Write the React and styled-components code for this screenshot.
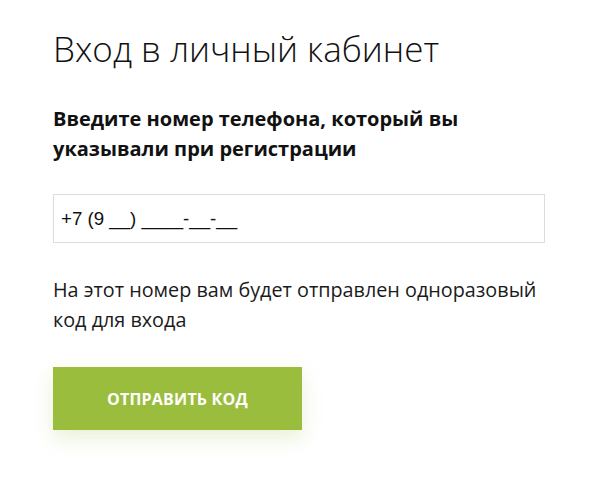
import React from "react";
import styled, { createGlobalStyle } from "styled-components";

const Global = createGlobalStyle`
  html, body { margin: 0; padding: 0; background: #fff; }
  body { font-family: "Open Sans", "Noto Sans", sans-serif; color: #1a1a1a; }
`;

const Page = styled.div`
  display: flex;
  flex-direction: column;
  align-items: flex-start;
  padding: 28px 55px 40px 53px;
`;

const Title = styled.h1`
  margin: 0;
  font-size: 35px;
  font-weight: 300;
  line-height: 42px;
  color: #111;
`;

const Lead = styled.h2`
  margin: 34px 0 0;
  font-size: 20px;
  font-weight: 700;
  line-height: 30px;
  color: #111;
`;

const PhoneInput = styled.input`
  box-sizing: border-box;
  margin-top: 30px;
  width: 492px;
  height: 49px;
  padding: 0 7px;
  border: 1px solid #dcdcdc;
  border-radius: 0;
  font-family: "Liberation Sans", Arial, sans-serif;
  font-size: 18.7px;
  color: #111;
  outline: none;
  &::placeholder { color: #111; opacity: 1; }
`;

const Note = styled.p`
  margin: 32px 0 0;
  font-size: 19.8px;
  font-weight: 400;
  line-height: 30px;
  color: #1a1a1a;
`;

const SendButton = styled.button`
  margin-top: 32px;
  width: 249px;
  height: 63px;
  border: none;
  border-radius: 0;
  background: #9bbd3e;
  color: #fff;
  font-family: "Open Sans", sans-serif;
  font-weight: 700;
  font-size: 16px;
  text-transform: uppercase;
  letter-spacing: 0.2px;
  box-shadow: 0 8px 18px rgba(155, 189, 62, 0.22);
  cursor: pointer;
`;

export default function App() {
  return (
    <>
      <Global />
      <Page>
        <Title>Вход в личный кабинет</Title>
        <Lead>
          Введите номер телефона, который вы
          <br />
          указывали при регистрации
        </Lead>
        <PhoneInput type="tel" placeholder="+7 (9 __) ____-__-__" />
        <Note>
          На этот номер вам будет отправлен одноразовый
          <br />
          код для входа
        </Note>
        <SendButton>Отправить код</SendButton>
      </Page>
    </>
  );
}
